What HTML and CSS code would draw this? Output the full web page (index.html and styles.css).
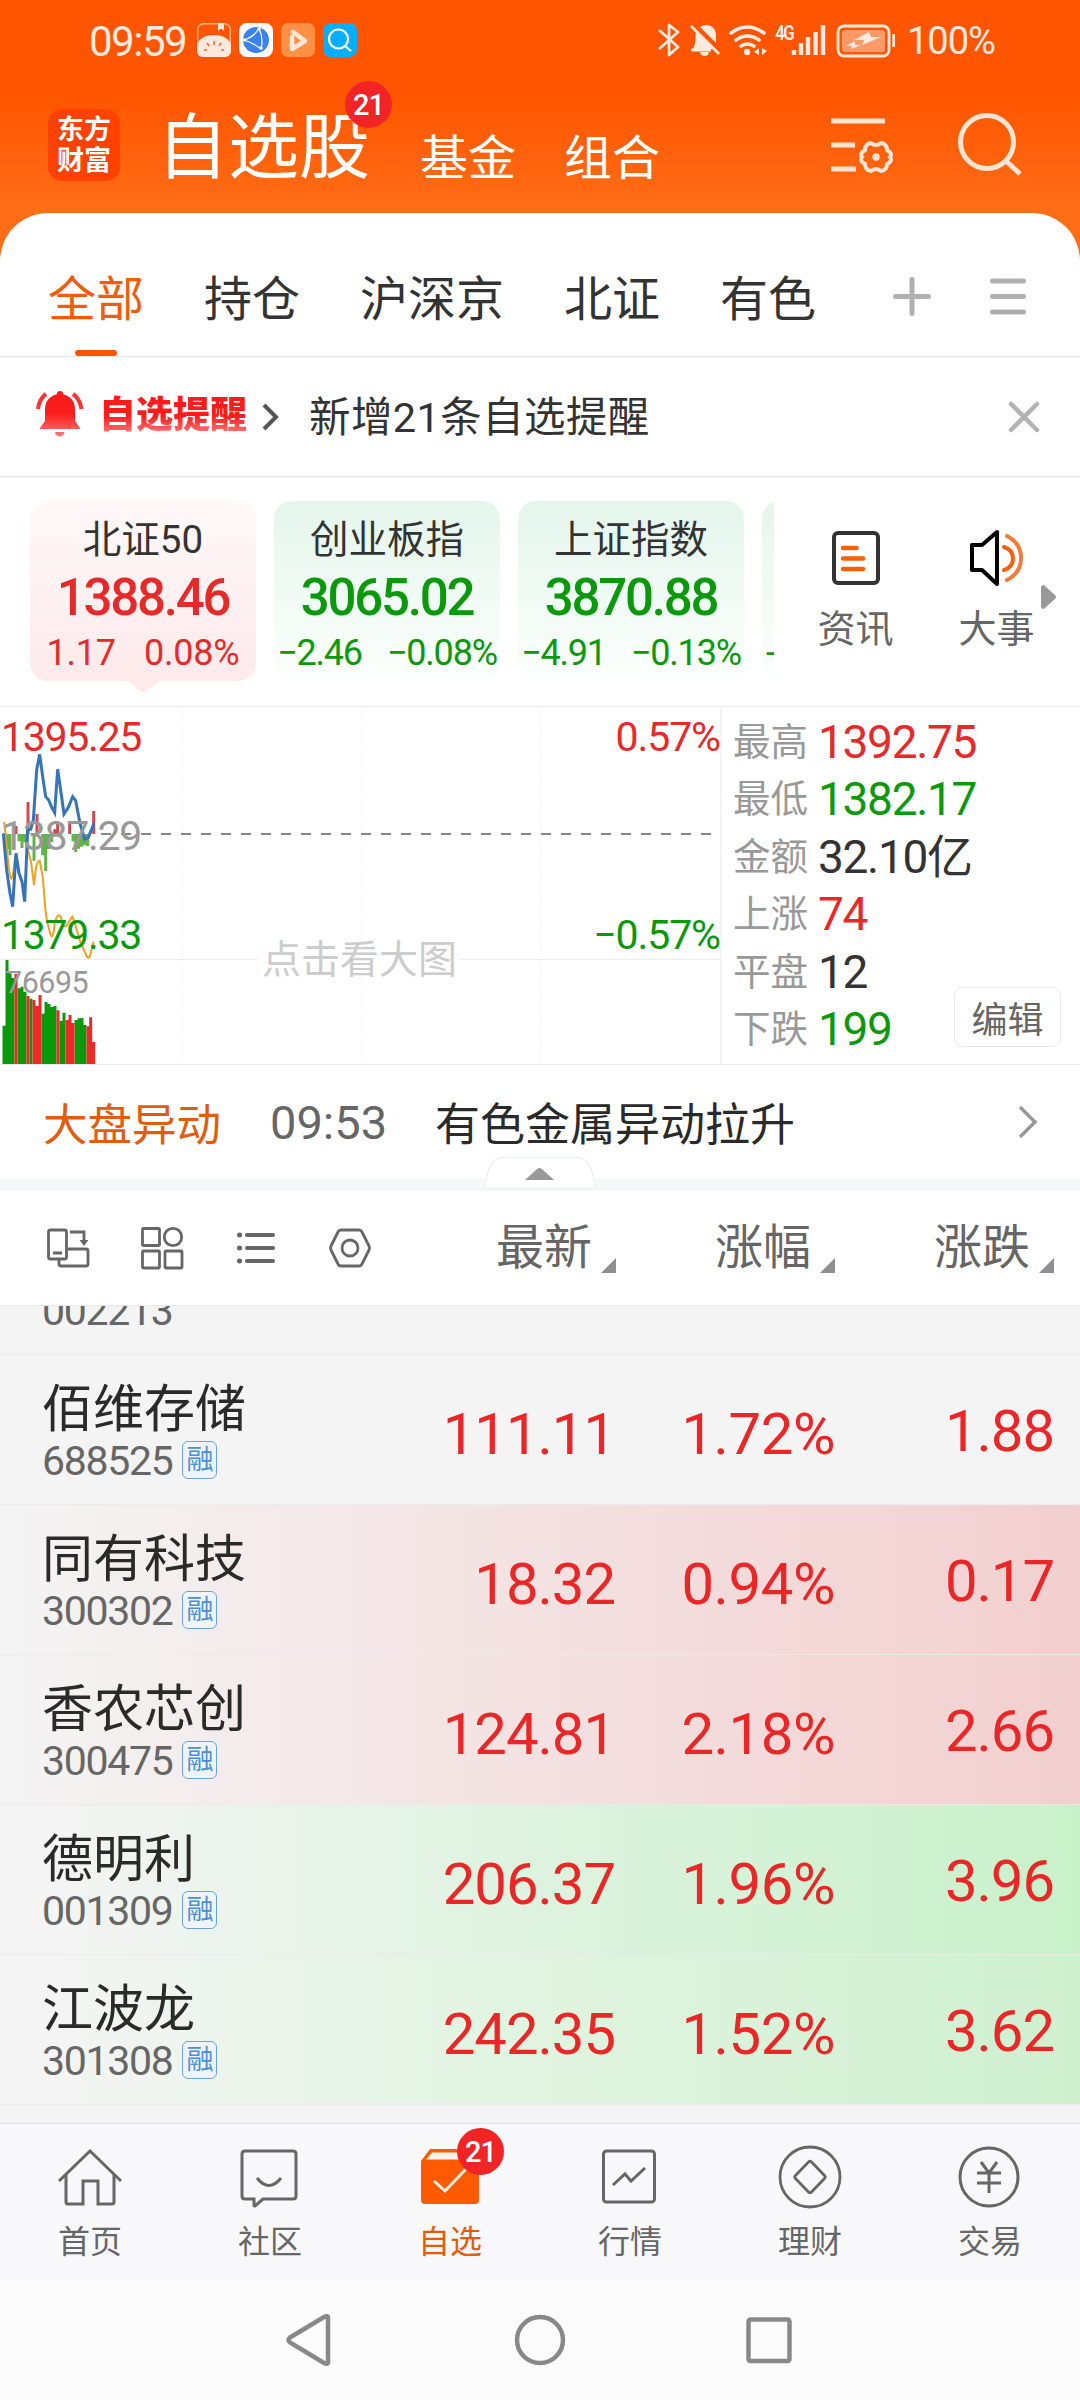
FILE: index.html
```html
<!DOCTYPE html>
<html lang="zh-CN">
<head>
    <meta charset="UTF-8">
    <meta name="viewport" content="width=device-width, initial-scale=1.0">
    <title>自选股</title>
    <link rel="stylesheet" href="styles.css">
</head>
<body>
    <!-- Status bar -->
    <div class="status-bar">
        <span class="clock">09:59</span>
        <div class="app-icons">
            <svg width="34" height="34" viewBox="0 0 34 34">
                <rect x="0.7" y="0.7" width="32.6" height="32.6" rx="6" fill="none" stroke="#ffb48c" stroke-width="1.4"/>
                <path d="M0 22C2 15 9 12 17 12s15 3 17 10v6a6 6 0 0 1-6 6H6a6 6 0 0 1-6-6z" fill="#ffe9df"/>
                <path d="M21 0h6v8l-3-2.500-3 2.500z" fill="#ffe9df"/>
                <path d="M17 18v4M10 20l2 3M24 20l-2 3M7 27h3M24 27h3" stroke="#ff6a20" stroke-width="1.6"/>
            </svg>
            <svg width="34" height="34" viewBox="0 0 34 34">
                <rect width="34" height="34" rx="8" fill="#fff"/>
                <circle cx="17" cy="17" r="13" fill="#3b82f0"/>
                <path d="M5 17C11 15 17 11 20 5M5 17c6 2 12 5 17 9M20 5c3 7 4 14 2 21" fill="none" stroke="#fff" stroke-width="1.2"/>
                <circle cx="5.500" cy="17" r="1.700" fill="#fff"/><circle cx="20" cy="6" r="1.700" fill="#fff"/><circle cx="22" cy="25" r="1.700" fill="#fff"/>
            </svg>
            <svg width="34" height="34" viewBox="0 0 34 34">
                <rect width="34" height="34" rx="7" fill="#ff9045"/>
                <path d="M11 14v12l13-8-12-9" fill="none" stroke="#ffeada" stroke-width="4.500" stroke-linecap="round" stroke-linejoin="round"/>
            </svg>
            <svg width="34" height="34" viewBox="0 0 34 34">
                <rect width="34" height="34" rx="8" fill="#06aefc"/>
                <circle cx="15.500" cy="16" r="9.500" fill="none" stroke="#fff" stroke-width="2.200"/>
                <path d="M22 23l6 5" stroke="#fff" stroke-width="2.200"/>
            </svg>
        </div>
        <div class="status-icons">
            <svg width="240" height="40" viewBox="656 19 240 40" fill="none" stroke="#ffeae0">
                <!-- bluetooth -->
                <path d="M660 29l19 17-9 8V24l9 7-19 17" stroke-width="2.800" stroke-linejoin="round"/>
                <!-- muted bell -->
                <path d="M697 29l19 19h-22c3-5 2-11 3-19zM701 26c8-5 16 0 16 8v8z" fill="#ffeae0" stroke="none"/>
                <path d="M692 25l28 28" stroke-width="2.600"/>
                <path d="M701 51h9a4.500 4 0 0 1-9 0z" fill="#ffeae0" stroke="none"/>
                <path d="M692 49h20" stroke-width="3"/>
                <!-- wifi -->
                <path d="M732 32q16-12 33 0M737 39q11-8 23 0M742 45q6-4 13 0" stroke-width="3.600" stroke-linecap="round"/>
                <circle cx="748" cy="51" r="3.200" fill="#ffeae0" stroke="none"/>
                <path d="M760 47v7l-5-3zM763 47v7l5-4z" fill="#ffeae0" stroke="none"/>
                <!-- signal -->
                <path d="M795 49v5M802 42v12M809 36v18M816.500 31v23M824 24v30" stroke-width="4.400"/>
                <!-- battery -->
                <rect x="839" y="25" width="51" height="30" rx="6" stroke-width="2.800"/>
                <rect x="843" y="29" width="43" height="22" rx="3" fill="#ff9a68" stroke="none"/>
                <path d="M870 31l-15 8h10l-2 5 19-8h-10zM856 40l-9 5h6l-1 3 10-4h-6z" fill="#ffeae0" stroke="none"/>
                <path d="M895 33v13" stroke-width="3.500"/>
            </svg>
            <span class="net">4G</span>
        </div>
        <span class="battery-text">100%</span>
    </div>

    <!-- Header -->
    <div class="header">
        <div class="logo"><span>东方</span><span>财富</span></div>
        <div class="title">自选股<span class="badge">21</span></div>
        <div class="title-tab">基金</div>
        <div class="title-tab">组合</div>
        <div class="header-icons">
            <svg width="64" height="60" viewBox="829 115 64 60" fill="none" stroke="#ffe4d4" stroke-width="5">
                <path d="M831 121h54M831 145h24M831 169h25"/>
                <path d="M871 143q5 4 10 0 6 1 6 7 6 4 3 7 3 4-3 7 0 6-6 7-5-4-10 0-6-1-6-7-6-3-3-7-3-3 3-7 0-6 6-7z" stroke-width="4"/>
                <circle cx="876" cy="157" r="3.700" fill="#ffe4d4" stroke="none"/>
            </svg>
            <svg width="66" height="66" viewBox="956 111 66 66" fill="none" stroke="#ffe4d4" stroke-width="5">
                <ellipse cx="987" cy="142" rx="26.500" ry="26.500"/>
                <path d="M1006 161l14 13"/>
            </svg>
        </div>
    </div>

    <div class="sheet">
        <!-- Group tabs -->
        <div class="tabs">
            <div class="tab active">全部</div>
            <div class="tab">持仓</div>
            <div class="tab">沪深京</div>
            <div class="tab">北证</div>
            <div class="tab">有色</div>
            <svg class="tab-icons" width="136" height="42" viewBox="891 276 136 42" stroke="#b0b0b0" stroke-width="5" stroke-linecap="round">
                <path d="M895.500 296.500h33M912 279.500v34M992.500 281h31M992.500 296.500h31M992.500 312h31"/>
            </svg>
        </div>

        <!-- Alert -->
        <div class="alert">
            <svg class="bell" width="50" height="48" viewBox="35 390 50 48">
                <defs>
                    <linearGradient id="red" x1="0" y1="0" x2="0" y2="1">
                        <stop offset="0.5" stop-color="#fb1c1c"/>
                        <stop offset="1" stop-color="#ff7a7a"/>
                    </linearGradient>
                </defs>
                <path d="M60 391c-2 0-3 1-3.500 3.500C49 396 45 402 45 409v12l-5 7v1h40v-1l-5-7v-12c0-7-4-13-11.500-14.500C63 392 62 391 60 391zM55 432h9.500c-1 6-8.500 6-9.500 0z" fill="url(#red)"/>
                <path d="M46 394q-7 5-8 15M73 394q7 5 8.500 15" fill="none" stroke="#f33" stroke-width="4"/>
            </svg>
            <span class="alert-title">自选提醒</span>
            <svg class="alert-arrow" width="18" height="30" viewBox="0 0 18 30" fill="none" stroke="#555" stroke-width="4"><path d="M2 3l12 12L2 27"/></svg>
            <span class="alert-text">新增21条自选提醒</span>
            <svg class="close" width="32" height="32" viewBox="0 0 32 32" stroke="#b3b3b3" stroke-width="4.500" stroke-linecap="round"><path d="M3 3l26 26M29 3L3 29"/></svg>
        </div>

        <!-- Index cards -->
        <div class="indices">
            <div class="cards">
                <div class="card up selected">
                    <div class="card-name">北证50</div>
                    <div class="card-value">1388.46</div>
                    <div class="card-change"><span>1.17</span><span>0.08%</span></div>
                </div>
                <div class="card down">
                    <div class="card-name">创业板指</div>
                    <div class="card-value">3065.02</div>
                    <div class="card-change"><span>−2.46</span><span>−0.08%</span></div>
                </div>
                <div class="card down">
                    <div class="card-name">上证指数</div>
                    <div class="card-value">3870.88</div>
                    <div class="card-change"><span>−4.91</span><span>−0.13%</span></div>
                </div>
                <div class="card down">
                    <div class="card-name"></div>
                    <div class="card-value"></div>
                    <div class="card-change clipped"><span>-</span></div>
                </div>
            </div>
            <div class="shortcut">
                <svg width="60" height="60" viewBox="0 0 60 60" fill="none">
                    <rect x="8" y="5" width="44" height="50" rx="4" stroke="#333" stroke-width="4"/>
                    <path d="M17 20h13.500M17 30.500h20M17 41h20" stroke="#f4600c" stroke-width="4.500" stroke-linecap="round"/>
                </svg>
                <span>资讯</span>
            </div>
            <div class="shortcut">
                <svg width="60" height="60" viewBox="0 0 60 60" fill="none">
                    <path d="M5 17h10L30 4v52L15 42H5z" stroke="#000" stroke-width="4" stroke-linejoin="round"/>
                    <path d="M37 19q9 3 9 11.500T37 42" stroke="#f4600c" stroke-width="4" stroke-linecap="round"/>
                    <path d="M40 8q14 7 14 22T40 52" stroke="#f47a3c" stroke-width="4" stroke-linecap="round"/>
                </svg>
                <span>大事</span>
            </div>
            <svg class="more" width="15" height="24" viewBox="0 0 15 24"><path d="M0 2q2-4 5 0l9 8q2 2 0 4l-9 8q-3 4-5 0z" fill="#999"/></svg>
        </div>

        <!-- Intraday chart -->
        <div class="market">
            <div class="chart">
                <svg width="720" height="359" viewBox="0 48 2160 1077" fill="none">
                    <path d="M4 49.500H2160M4 808H772M1378 808H2160M4 1123.500H2160" stroke="#eaeaea" stroke-width="3"/>
                    <path d="M547 52V1123M1085 52V1123M1623 52V1123" stroke="#e6e6e6" stroke-width="3" stroke-dasharray="3 6"/>
                    <path d="M303 432H2134" stroke="#888" stroke-width="6" stroke-dasharray="30 30"/>
                    <!-- momentum bars -->
                    <path d="M21 432v45M30 432v64M57 432v22M66 432v42M75 432v24M102 432v80M128 432v64M137 432v111M146 432v45M155 432v24M182 432v12M219 432v22M227 432v54M236 432v44M245 432v38M254 432v34M263 432v36" stroke="#5fb548" stroke-width="9"/>
                    <path d="M48 432v-24M84 432v-96M111 432v-60M164 432v-14M173 432v-32M209 432v-32M281 432v-69" stroke="#cf4b50" stroke-width="9"/>
                    <path d="M12 396C20 440 24 560 34 566 42 562 42 500 48 492M84 480L93 515 102 585C106 550 108 510 119 512L128 560C136 640 134 680 146 712 152 740 158 760 164 700 172 670 180 668 186 694 194 730 206 694 217 680 228 700 236 752 248 772L262 802C272 812 274 770 281 755" stroke="#f0a020" stroke-width="6"/>
                    <path d="M10 430L20 540 30 610 38 650 48 490 57 550 66 575 74 635 83 420 92 418 100 390 110 240 119 193 128 260 137 320 146 330 155 352 164 368 173 238 182 300 192 372 205 352 218 320 227 332 240 400 254 448 265 442 282 400" stroke="#3674b9" stroke-width="9"/>
                    <!-- volume -->
                    <path d="M12 1122V1007M21 1122V810M30 1122V850M39 1122V864M57 1122V895M66 1122V890M75 1122V905M93 1122V926M129 1122V971M138 1122V936M147 1122V942M156 1122V951M165 1122V948M183 1122V993M192 1122V968M228 1122V990M237 1122V985M246 1122V984M255 1122V1005" stroke="#0a990a" stroke-width="9"/>
                    <path d="M48 1122V852M84 1122V918M102 1122V930M111 1122V948M120 1122V915M174 1122V961M201 1122V990M210 1122V975M219 1122V999M264 1122V1009M272 1122V982M281 1122V1056" stroke="#ec2a28" stroke-width="9"/>
                </svg>
                <span class="label top red">1395.25</span>
                <span class="label mid">1387.29</span>
                <span class="label low green">1379.33</span>
                <span class="label vol">76695</span>
                <span class="label top right red">0.57%</span>
                <span class="label low right green">−0.57%</span>
                <span class="watermark">点击看大图</span>
            </div>
            <div class="stats">
                <div class="stat"><span>最高</span><b class="red">1392.75</b></div>
                <div class="stat"><span>最低</span><b class="green">1382.17</b></div>
                <div class="stat"><span>金额</span><b>32.10亿</b></div>
                <div class="stat"><span>上涨</span><b class="red">74</b></div>
                <div class="stat"><span>平盘</span><b>12</b></div>
                <div class="stat"><span>下跌</span><b class="green">199</b></div>
                <button class="edit">编辑</button>
            </div>
        </div>

        <!-- News -->
        <div class="news">
            <span class="news-tag">大盘异动</span>
            <span class="news-time">09:53</span>
            <span class="news-text">有色金属异动拉升</span>
            <svg width="20" height="34" viewBox="0 0 20 34" fill="none" stroke="#999" stroke-width="3.500"><path d="M2 2l15 15L2 32"/></svg>
        </div>
        <div class="divider">
            <svg class="collapse" width="114" height="34" viewBox="483 1156 114 34">
                <path d="M484.500 1188.500C488 1170 489 1157.500 504 1157.500h72C591 1157.500 592 1170 595.500 1188.500z" fill="#fff" stroke="#f0f1f3" stroke-width="1.500"/>
                <path d="M525 1180l12-11q2.500-2 5 0l12 11z" fill="#999"/>
            </svg>
        </div>

        <!-- List head -->
        <div class="list-head">
            <svg width="330" height="46" viewBox="44 1225 330 46" fill="none" stroke="#666" stroke-width="2.800">
                <rect x="48.500" y="1230" width="18" height="29" rx="2"/>
                <path d="M53 1253h9M59 1259v5q0 2 2 2h25q2 0 2-2v-13q0-2-2-2H67M70 1232h14v10"/>
                <path d="M79.500 1240h9l-4.500 6z" fill="#666" stroke="none"/>
                <rect x="142.500" y="1228.500" width="17" height="17" rx="1"/>
                <rect x="142.500" y="1251" width="17" height="17" rx="1"/>
                <rect x="165" y="1251" width="17" height="17" rx="1"/>
                <circle cx="173" cy="1237" r="8.700"/>
                <path d="M247 1235h26M247 1248h26M247 1261h26" stroke-width="4" stroke-linecap="round"/>
                <path d="M239.500 1235h.1M239.500 1248h.1M239.500 1261h.1" stroke-width="5" stroke-linecap="round"/>
                <path d="M341 1230h18q2 0 3 2l7 14q1 2 0 4l-7 14q-1 2-3 2h-18q-2 0-3-2l-7-14q-1-2 0-4l7-14q1-2 3-2z"/>
                <circle cx="350" cy="1248" r="8"/>
            </svg>
            <div class="col">最新</div>
            <div class="col">涨幅</div>
            <div class="col">涨跌</div>
        </div>

        <!-- Stock list -->
        <div class="list">
            <div class="row cut"><span class="code">002213</span></div>
            <div class="row">
                <div class="stock"><div class="name">佰维存储</div><div class="code">688525<i>融</i></div></div>
                <div class="price">111.11</div><div class="pct">1.72%</div><div class="diff">1.88</div>
            </div>
            <div class="row flash-red">
                <div class="stock"><div class="name">同有科技</div><div class="code">300302<i>融</i></div></div>
                <div class="price">18.32</div><div class="pct">0.94%</div><div class="diff">0.17</div>
            </div>
            <div class="row flash-red">
                <div class="stock"><div class="name">香农芯创</div><div class="code">300475<i>融</i></div></div>
                <div class="price">124.81</div><div class="pct">2.18%</div><div class="diff">2.66</div>
            </div>
            <div class="row flash-green">
                <div class="stock"><div class="name">德明利</div><div class="code">001309<i>融</i></div></div>
                <div class="price">206.37</div><div class="pct">1.96%</div><div class="diff">3.96</div>
            </div>
            <div class="row flash-green fading">
                <div class="stock"><div class="name">江波龙</div><div class="code">301308<i>融</i></div></div>
                <div class="price">242.35</div><div class="pct">1.52%</div><div class="diff">3.62</div>
            </div>
        </div>
    </div>

    <!-- Bottom navigation -->
    <div class="nav">
        <div class="nav-item">
            <svg width="68" height="68" viewBox="-34 -34 68 68" fill="none" stroke="#666" stroke-width="3">
                <path d="M-31 3L0-27 31 3M-24-3v27q0 2 2 2h15V3H8v23h14q2 0 2-2V-3"/>
            </svg>
            <span>首页</span>
        </div>
        <div class="nav-item">
            <svg width="68" height="68" viewBox="-33 -34 68 68" fill="none" stroke="#666" stroke-width="3">
                <path d="M-24-27h48q3 0 3 3v42q0 3-3 3H-6l-8 7q-1 0-1-1v-6h-9q-3 0-3-3v-42q0-3 3-3z"/>
                <path d="M-12 0Q0 15 12 0"/>
            </svg>
            <span>社区</span>
        </div>
        <div class="nav-item current">
            <svg width="68" height="68" viewBox="-34 -34 68 68" fill="none">
                <path d="M-29-17l9-12h45q4 0 4 4V22q0 4-4 4h-50q-4 0-4-4z" fill="#ff5a00"/>
                <path d="M-18-25.500h40v7h-46z" fill="#fff3ec"/>
                <path d="M-16 3L-5 13 16-9" stroke="#ffeee4" stroke-width="3"/>
            </svg>
            <span>自选</span>
            <span class="badge">21</span>
        </div>
        <div class="nav-item">
            <svg width="68" height="68" viewBox="-33 -34 68 68" fill="none" stroke="#666" stroke-width="3">
                <rect x="-25.500" y="-27" width="51" height="51" rx="3"/>
                <path d="M-16 7L-4-4 2 3 16-10"/>
            </svg>
            <span>行情</span>
        </div>
        <div class="nav-item">
            <svg width="68" height="68" viewBox="-34 -34 68 68" fill="none" stroke="#666" stroke-width="2.800">
                <circle cx="0" cy="-1" r="30"/>
                <path d="M-1.500-16q1.500-1.500 3 0l13 13.500q1.500 1.500 0 3L1.500 14q-1.500 1.500-3 0l-13-13.500q-1.500-1.500 0-3z"/>
            </svg>
            <span>理财</span>
        </div>
        <div class="nav-item">
            <svg width="68" height="68" viewBox="-33 -34 68 68" fill="none" stroke="#666" stroke-width="3">
                <circle cx="0" cy="-1" r="29"/>
                <path d="M-8-16L0-5 8-16M0-5V15M-12-5h24M-12 5h24"/>
            </svg>
            <span>交易</span>
        </div>
    </div>

    <div class="system-nav">
        <svg width="540" height="60" viewBox="270 2310 540 60" fill="none" stroke="#888" stroke-width="4.500">
            <path d="M290 2337.500l34-20.500q4-2 4 1v44q0 3-4 1l-34-20.500q-3-2.500 0-5z"/>
            <circle cx="540" cy="2340" r="23"/>
            <rect x="748.500" y="2319.500" width="41" height="41.500" rx="2"/>
        </svg>
    </div>
</body>
</html>
```
FILE: styles.css
```css
* {
    box-sizing: border-box;
}
body {
    font-family: Roboto, "Noto Sans CJK SC", sans-serif;
    margin: 0;
    width: 1080px;
    height: 2400px;
    display: flex;
    flex-direction: column;
    overflow: hidden;
    color: #333;
    background: linear-gradient(#ff5500 95px, #ff6e17 213px, #ff6e17 280px, #fcfcfc 281px);
}
svg {
    display: block;
    flex: none;
}
.red {
    color: #e62a2a;
}
.green {
    color: #0a990a;
}

/* status bar */
.status-bar {
    height: 80px;
    display: flex;
    align-items: center;
    padding-left: 89px;
    color: #ffeae0;
}
.clock {
    width: 108px;
    font-size: 42px;
    letter-spacing: -1.5px;
    padding-top: 3px;
}
.app-icons {
    display: flex;
    gap: 8px;
}
.status-icons {
    position: relative;
    margin-left: 298px;
}
.net {
    position: absolute;
    left: 120px;
    top: 3px;
    font-size: 20px;
    line-height: 20px;
    font-weight: 700;
    letter-spacing: -2px;
    transform: scaleX(0.85);
    transform-origin: left;
}
.battery-text {
    margin-left: 12px;
    font-size: 38px;
    letter-spacing: -1px;
    padding-top: 2px;
}

/* header */
.header {
    height: 133px;
    display: flex;
    color: #fff;
    padding-left: 48px;
}
.logo {
    width: 72px;
    height: 72px;
    margin-top: 29px;
    padding-top: 6px;
    border-radius: 14px;
    background: #ff4200;
    font-size: 27px;
    font-weight: 700;
    line-height: 31px;
    text-align: center;
}
.logo span {
    display: block;
}
.title {
    position: relative;
    margin-left: 37px;
    width: 263px;
    font-size: 71px;
    line-height: 70px;
    padding-top: 33px;
}
.badge {
    position: absolute;
    width: 47px;
    height: 47px;
    border-radius: 50%;
    background: #f32425;
    color: #fff;
    font-size: 29px;
    font-weight: 500;
    line-height: 48px;
    text-align: center;
    letter-spacing: -1px;
}
.title .badge {
    left: 188px;
    top: 1px;
}
.title-tab {
    font-size: 48px;
    line-height: 56px;
    padding-top: 51px;
    margin-right: 48px;
}
.header-icons {
    display: flex;
    align-items: flex-start;
    gap: 63px;
    margin-left: 121px;
    padding-top: 31px;
}
.header-icons svg:first-child {
    margin-top: 4px;
}

/* sheet */
.sheet {
    flex: none;
    height: 1910px;
    background: #fff;
    border-radius: 48px 48px 0 0;
}
.tabs {
    height: 144px;
    display: flex;
    gap: 60px;
    padding-left: 48px;
    border-bottom: 1px solid #e4e4e4;
    font-size: 48px;
    line-height: 60px;
}
.tab {
    position: relative;
    padding-top: 57px;
}
.tab.active {
    color: #f45c08;
}
.tab.active::after {
    content: "";
    position: absolute;
    left: 27px;
    bottom: 0;
    width: 42px;
    height: 6px;
    border-radius: 3px;
    background: #ff5500;
}
.tab-icons {
    margin: 63px 0 0 15px;
}
.alert {
    height: 120px;
    display: flex;
    align-items: center;
    padding-left: 35px;
    border-bottom: 1px solid #e4e4e4;
}
.bell {
    margin-top: -6px;
}
.alert-title {
    margin: -2px 0 0 14px;
    width: 164px;
    font-size: 37px;
    line-height: 44px;
    font-weight: 900;
    background: linear-gradient(#fb1c1c 50%, #ff7373 88%);
    -webkit-background-clip: text;
    background-clip: text;
    color: transparent;
}
.alert-arrow {
    margin-left: -1px;
}
.alert-text {
    margin: -5px 0 0 29px;
    width: 699px;
    font-size: 41.5px;
    letter-spacing: 0.4px;
}

/* index cards */
.indices {
    position: relative;
    height: 229px;
    display: flex;
    padding: 24px 0 0 30px;
}
.cards {
    flex: none;
    width: 744px;
    height: 200px;
    margin-right: 34px;
    display: flex;
    gap: 18px;
    overflow: hidden;
}
.card {
    position: relative;
    flex: none;
    width: 226px;
    height: 180px;
    border-radius: 18px;
    text-align: center;
    white-space: nowrap;
}
.card.up {
    background: linear-gradient(#fff8f8, #feeaeb);
    color: #e62a2a;
}
.card.down {
    background: linear-gradient(#e4f6ec, #fcfffd);
    color: #0a990a;
}
.card.selected::after {
    content: "";
    position: absolute;
    left: 97px;
    top: 180px;
    border: 16px solid transparent;
    border-top: 12px solid #feeaeb;
    border-bottom: 0;
}
.card-name {
    height: 70px;
    padding-top: 9px;
    font-size: 38.5px;
    line-height: 60px;
    color: #333;
}
.card-value {
    height: 56px;
    font-size: 51px;
    font-weight: 500;
    line-height: 54px;
    letter-spacing: -2.2px;
}
.card-change {
    display: flex;
    justify-content: center;
    gap: 25px;
    font-size: 36px;
    line-height: 52px;
    letter-spacing: -1.2px;
}
.card.up .card-change {
    gap: 28px;
    letter-spacing: -0.2px;
}
.card-change.clipped {
    justify-content: flex-start;
    padding-left: 4px;
}
.shortcut {
    flex: none;
    width: 95px;
    margin-right: 46px;
    padding-top: 27px;
    display: flex;
    flex-direction: column;
    align-items: center;
    font-size: 38px;
    line-height: 56px;
    color: #666;
}
.shortcut span {
    margin-top: 13px;
}
.more {
    position: absolute;
    left: 1041px;
    top: 108px;
}

/* chart */
.market {
    height: 359px;
    display: flex;
}
.chart {
    position: relative;
    width: 720px;
}
.label {
    position: absolute;
    left: 1px;
    font-size: 41px;
    line-height: 40px;
    letter-spacing: -1.3px;
}
.label.right {
    left: auto;
    right: 0;
    letter-spacing: -1.1px;
}
.label.top {
    top: 11px;
}
.label.mid {
    top: 110px;
    color: #999;
}
.label.low {
    top: 209px;
}
.label.vol {
    left: 5px;
    top: 257px;
    font-size: 30.5px;
    letter-spacing: -0.5px;
    color: #999;
}
.watermark {
    position: absolute;
    left: 262px;
    top: 226px;
    font-size: 39px;
    line-height: 56px;
    color: #ccc;
}
.stats {
    position: relative;
    flex: 1;
    padding: 6px 0 0 11px;
    border-top: 1px solid #eaeaea;
    border-bottom: 1px solid #eaeaea;
    border-left: 2px solid #f4f4f4;
}
.stat {
    display: flex;
    height: 57.4px;
    line-height: 58px;
    font-size: 37.5px;
    color: #999;
}
.stat b {
    margin-left: 10px;
    font-size: 46px;
    font-weight: 400;
    letter-spacing: -1.3px;
    color: #333;
}
.stat b.red {
    color: #e62a2a;
}
.stat b.green {
    color: #0a990a;
}
.edit {
    position: absolute;
    left: 232px;
    top: 280px;
    width: 107px;
    height: 60px;
    padding: 0 0 1px;
    border: 1px solid #e8e8e8;
    border-radius: 8px;
    background: #fff;
    font-family: inherit;
    font-size: 36px;
    color: #666;
}

/* news */
.news {
    height: 114px;
    display: flex;
    align-items: center;
    padding-left: 43px;
    font-size: 45px;
    color: #2a2a2a;
}
.news-tag {
    width: 227px;
    margin-top: -2px;
    font-size: 44.5px;
    color: #e25c0c;
}
.news-time {
    width: 165px;
    font-size: 47px;
    color: #666;
}
.news-text {
    width: 583px;
    margin-top: -2px;
}
.divider {
    position: relative;
    height: 12px;
    background: #f5f7f9;
}
.collapse {
    position: absolute;
    left: 483px;
    top: -23px;
}

/* list */
.list-head {
    height: 114px;
    display: flex;
    align-items: center;
    padding-left: 44px;
    font-size: 48px;
    line-height: 56px;
    color: #666;
}
.col {
    position: relative;
    width: 219px;
    padding-left: 122px;
}
.col::after {
    content: "";
    position: absolute;
    left: 227px;
    bottom: 3px;
    border-left: 15px solid transparent;
    border-bottom: 15px solid #8e8e93;
}
.list {
    height: 818px;
    overflow: hidden;
    background: #f4f4f4;
    border-top: 1px solid #e8e8e8;
}
.row {
    height: 150px;
    display: flex;
    padding-left: 42px;
    border-bottom: 1px solid #ebebeb;
    font-size: 58px;
    line-height: 70px;
    color: #ea2626;
}
.row.cut {
    height: 49px;
}
.row.cut .code {
    margin-top: -17px;
}
.row.flash-red {
    background: linear-gradient(90deg, #f4f4f4, #f4e4e4 42%, #f3cfcf);
}
.row.flash-green {
    background: linear-gradient(90deg, #f4f4f4 4%, #e0f3e1 45%, #c8f1ca);
}
.row.fading {
    background: linear-gradient(90deg, #f4f4f4 4%, #e2f4e2 45%, #cff0cf);
}
.stock {
    width: 300px;
}
.name {
    margin-top: 25px;
    height: 59px;
    font-size: 51px;
    line-height: 60px;
    color: #2a2a2a;
}
.code {
    display: flex;
    font-size: 41px;
    line-height: 44px;
    letter-spacing: -1.3px;
    color: #666;
}
.code i {
    width: 35px;
    height: 38px;
    margin: 2px 0 0 10px;
    border: 1.5px solid #6aa3dc;
    border-radius: 6px;
    background: #eef4fa;
    font-size: 27px;
    font-style: normal;
    line-height: 36px;
    letter-spacing: 0;
    text-align: center;
    color: #4a8ed4;
}
.price {
    width: 273px;
    padding-top: 44px;
    text-align: right;
    letter-spacing: -1px;
}
.pct {
    width: 220px;
    padding-top: 44px;
    text-align: right;
    letter-spacing: -0.4px;
}
.diff {
    width: 219px;
    padding-top: 41px;
    text-align: right;
    letter-spacing: -1px;
}

/* bottom navigation */
.nav {
    flex: none;
    height: 157px;
    display: flex;
    background: #f8f8fa;
    border-top: 1px solid #e0e2e4;
}
.nav-item {
    position: relative;
    width: 180px;
    padding-top: 20px;
    display: flex;
    flex-direction: column;
    align-items: center;
    font-size: 32px;
    line-height: 40px;
    color: #666;
}
.nav-item span:not(.badge) {
    margin-top: 10px;
}
.nav-item.current {
    color: #e25c0c;
}
.nav-item .badge {
    left: 97px;
    top: 4px;
}
.system-nav {
    flex: 1;
    display: flex;
    justify-content: center;
    align-items: center;
    background: #fcfcfc;
}
```
